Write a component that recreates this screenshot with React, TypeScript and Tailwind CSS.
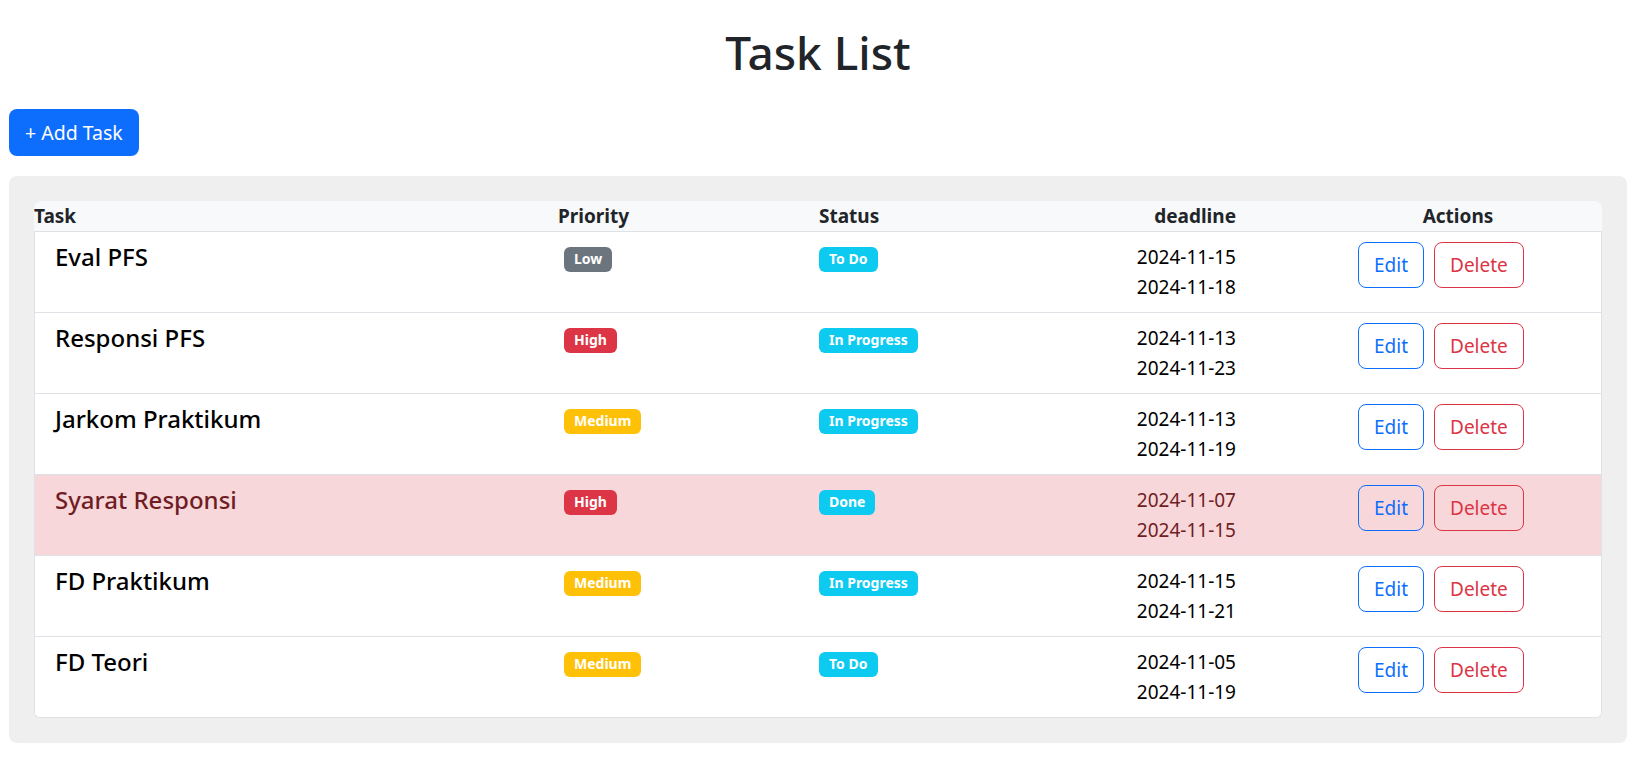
import React from "react"

type Task = {
    name: string
    priority: "Low" | "Medium" | "High"
    status: "To Do" | "In Progress" | "Done"
    start: string
    end: string
    overdue?: boolean
}

const tasks: Task[] = [
    { name: "Eval PFS", priority: "Low", status: "To Do", start: "2024-11-15", end: "2024-11-18" },
    { name: "Responsi PFS", priority: "High", status: "In Progress", start: "2024-11-13", end: "2024-11-23" },
    { name: "Jarkom Praktikum", priority: "Medium", status: "In Progress", start: "2024-11-13", end: "2024-11-19" },
    { name: "Syarat Responsi", priority: "High", status: "Done", start: "2024-11-07", end: "2024-11-15", overdue: true },
    { name: "FD Praktikum", priority: "Medium", status: "In Progress", start: "2024-11-15", end: "2024-11-21" },
    { name: "FD Teori", priority: "Medium", status: "To Do", start: "2024-11-05", end: "2024-11-19" },
]

const priorityColor = {
    Low: "bg-[#6c757d]",
    Medium: "bg-[#ffc107]",
    High: "bg-[#dc3545]",
}

function Badge({ label, color }: { label: string; color: string }) {
    return (
        <span className={`inline-flex h-[25px] items-center rounded-[6px] px-[10px] text-[14px] font-bold leading-none text-white ${color}`}>
            {label}
        </span>
    )
}

function TaskRow({ task, last }: { task: Task; last: boolean }) {
    const tone = task.overdue ? "bg-[#f8d7da] text-[#6f1d24]" : "bg-white text-black"

    return (
        <div className={`flex pt-[10px] pb-[10px] ${tone} ${last ? "" : "border-b border-[#dee2e6]"}`}>
            <div className="w-[529px] pl-[20px] text-[24px] font-medium leading-[30px]">{task.name}</div>
            <div className="w-[255px] pt-[4px]">
                <Badge label={task.priority} color={priorityColor[task.priority]} />
            </div>
            <div className="w-[208px] pt-[4px]">
                <Badge label={task.status} color="bg-[#0dcaf0]" />
            </div>
            <div className="w-[209px] text-right text-[19px] leading-[30px]">
                <div>{task.start}</div>
                <div>{task.end}</div>
            </div>
            <div className="ml-[122px] flex gap-[10px]">
                <button className="h-[46px] rounded-lg border border-[#0d6efd] px-[15px] text-[19px] text-[#0d6efd]">
                    Edit
                </button>
                <button className="h-[46px] rounded-lg border border-[#dc3545] px-[15px] text-[19px] text-[#dc3545]">
                    Delete
                </button>
            </div>
        </div>
    )
}

export default function App() {
    return (
        <div className="min-h-screen bg-white px-[9px] pb-6 font-['Noto_Sans',sans-serif]">
            <h1 className="pt-[25px] text-center text-[46px] font-medium leading-[55px] text-[#212529]">
                Task List
            </h1>

            <button className="mt-[29px] h-[47px] rounded-lg bg-[#0d6efd] px-4 text-[19.5px] text-white">
                + Add Task
            </button>

            <div className="mt-[20px] rounded-lg bg-[#efefef] p-[25px]">
                <div className="flex h-[31px] items-center rounded-t-lg border-b border-[#dee2e6] bg-[#f8f9fa] text-[19px] font-bold leading-[30px] text-[#212529]">
                    <div className="w-[524px]">Task</div>
                    <div className="w-[261px]">Priority</div>
                    <div className="w-[208px]">Status</div>
                    <div className="w-[209px] text-right">deadline</div>
                    <div className="w-[78px]" />
                    <div className="flex-1 text-center">Actions</div>
                </div>
                <div className="overflow-hidden rounded-b-md border-x border-b border-[#dee2e6] bg-white">
                    {tasks.map((task, i) => (
                        <TaskRow key={task.name} task={task} last={i === tasks.length - 1} />
                    ))}
                </div>
            </div>
        </div>
    )
}
